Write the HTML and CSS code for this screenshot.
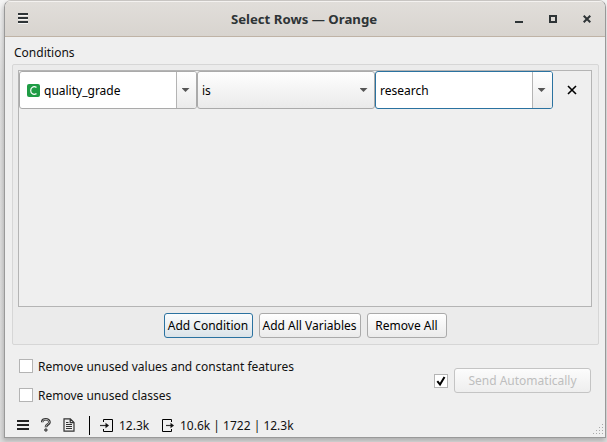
FILE: index.html
```html
<!DOCTYPE html>
<html lang="en">
<head>
<meta charset="utf-8">
<title>Select Rows — Orange</title>
<link rel="stylesheet" href="styles.css">
</head>
<body>
<div class="window">
  <header class="titlebar">
    <svg class="burger" width="10" height="12" viewBox="0 0 10 12"><path d="M0 2.500h10M0 6.500h10M0 10.500h10" stroke="#fff" opacity=".7"/><path d="M0 1h10M0 5h10M0 9h10" stroke="#2e3436" stroke-width="2"/></svg>
    <h1>Select Rows — Orange</h1>
    <div class="controls">
      <svg width="8" height="8" viewBox="0 0 8 8"><path d="M0 7h8" stroke="#2e3436" stroke-width="2"/></svg>
      <svg width="8" height="8" viewBox="0 0 8 8"><path d="M1 1h6v6H1z" fill="none" stroke="#2e3436" stroke-width="2"/></svg>
      <svg width="8" height="8" viewBox="0 0 8 8"><path d="M.7.7l6.600 6.600M7.300.7L.7 7.300" stroke="#2e3436" stroke-width="2"/></svg>
    </div>
  </header>
  <main>
    <div class="label">Conditions</div>
    <section class="group">
      <div class="list">
        <div class="row">
          <div class="combo"><div class="field"><span class="badge"><svg width="13" height="13" viewBox="0 0 13 13"><path d="M9.500 3.400C6.200 1.700 3.700 3.500 3.700 6.500s2.500 4.800 5.800 3.100" fill="none" stroke="#fff" stroke-width="1.200"/></svg></span><span class="text">quality_grade</span></div><div class="drop"><i></i></div></div>
          <div class="combo plain"><div class="field"><span class="text">is</span></div><div class="drop"><i></i></div></div>
          <div class="combo focus"><div class="field"><span class="text">research</span></div><div class="drop"><i></i></div></div>
          <svg class="remove" width="10" height="10" viewBox="0 0 10 10"><path d="M1 1l8 8M9 1L1 9" stroke="#000" stroke-width="1.600"/></svg>
        </div>
      </div>
      <div class="buttons">
        <div class="btn active add">Add Condition</div>
        <div class="btn all">Add All Variables</div>
        <div class="btn clear">Remove All</div>
      </div>
    </section>
    <section class="options">
      <div class="checks">
        <div class="check"><span class="box"></span><span class="text">Remove unused values and constant features</span></div>
        <div class="check"><span class="box"></span><span class="text">Remove unused classes</span></div>
      </div>
      <div class="send">
        <span class="box"><svg width="12" height="12" viewBox="0 0 12 12"><path d="M2.300 6.200l2.700 3.300L9.500 2" fill="none" stroke="#000" stroke-width="2"/></svg></span>
        <div class="btn disabled">Send Automatically</div>
      </div>
    </section>
  </main>
  <footer class="status">
    <svg class="menu" width="12" height="10" viewBox="0 0 12 10"><path d="M0 1h12M0 5h12M0 9h12" stroke="#222" stroke-width="1.800"/></svg>
    <svg class="help" width="10" height="14" viewBox="0 0 10 14"><path d="M1.200 4.200C1.200 2 2.800 1.300 4.800 1.300S8.500 2.400 8.500 4.200C8.500 6.500 4.900 6.200 4.900 9.200" fill="none" stroke="#333" stroke-width="2.600"/><path d="M1.400 3.800C1.700 2 3 1.500 4.800 1.500S8.300 2.500 8.300 4.200C8.300 6.300 4.900 6.200 4.900 8.800" fill="none" stroke="#ddd" stroke-width=".8"/><circle cx="4.900" cy="12" r="1.300" fill="#777" stroke="#333" stroke-width=".8"/></svg>
    <svg class="doc" width="12" height="14" viewBox="0 0 12 14"><path d="M1 .8h6.300L11 4.500v8.700H1zM7.200 1v3.700H11" fill="none" stroke="#333" stroke-width="1.200"/><path d="M3 4.500h2.500M3 6.500h6M3 8.500h6M3 10.500h6" stroke="#333"/></svg>
    <span class="divider"></span>
    <svg class="in" width="13" height="15" viewBox="0 0 13 15"><path d="M3.500 4V1.500h9v12h-9V11" fill="none" stroke="#000"/><path d="M0 7.500h8" stroke="#333" stroke-width="1.200"/><path d="M5.500 4.700L9 7.500l-3.500 2.800z" fill="#111"/></svg>
    <span class="count text">12.3k</span>
    <svg class="out" width="13" height="15" viewBox="0 0 13 15"><path d="M9.500 4V1.500h-9v12h9V11" fill="none" stroke="#000"/><path d="M4 7.500h6" stroke="#333" stroke-width="1.200"/><path d="M8.500 4.700L12 7.500l-3.500 2.800z" fill="#111"/></svg>
    <span class="text">10.6k | 1722 | 12.3k</span>
    <svg class="grip" width="12" height="12" viewBox="0 0 12 12"><path d="M9 1.500h1M6 4.500h1M9 4.500h1M3 7.500h1M6 7.500h1M9 7.500h1M0 10.500h1M3 10.500h1M6 10.500h1M9 10.500h1" stroke="#aaa"/></svg>
  </footer>
</div>
</body>
</html>
```
FILE: styles.css
```css
* { box-sizing: border-box; }
body {
  margin: 0;
  height: 442px;
  padding-left: 4px;
  overflow: hidden;
  background: linear-gradient(#f4f4f4, #e2e2e2 80px, #dedede);
  font: 12px/18px "Noto Sans", sans-serif;
  color: #111;
}
svg { display: block; flex: none; }
.window {
  width: 602px;
  height: 438px;
  display: flex;
  flex-direction: column;
  border: 1px solid #999;
  border-top-color: #c8c5c2;
  border-radius: 7px 7px 0 0;
  background: #efefef;
  box-shadow: -1px 3px 5px rgba(0, 0, 0, .22);
  overflow: hidden;
}
.titlebar {
  height: 36px;
  flex: none;
  display: flex;
  align-items: center;
  padding: 0 14px 0 13px;
  border-bottom: 1px solid #bfb3a6;
  background: linear-gradient(#e1deda, #d8d4cf);
  box-shadow: inset 0 1px #f4f2f0;
}
.burger { margin-top: 1px; }
h1 {
  flex: 1;
  margin: 1px 0 0 74px;
  text-align: center;
  font-size: 13.2px;
  font-weight: bold;
  line-height: 18px;
  color: #2e3436;
}
.controls { width: 76px; margin-left: 9px; display: flex; justify-content: space-between; align-items: center; }
main { flex: 1; padding: 7px 6px 0 7px; }
.label { padding-left: 2px; height: 20px; }
.text { padding-top: 1px; }
.group {
  height: 281px;
  padding: 5px 6px 5px 5px;
  border: 1px solid #d6d6d6;
  border-radius: 2px;
  background: #ebebeb;
}
.list { height: 237px; border: 1px solid #b4b4b4; background: #efefef; }
.row { display: flex; align-items: center; }
.combo {
  width: 178px;
  height: 38px;
  display: flex;
  border: 1px solid #aaa;
  border-radius: 3px;
  background: #fff;
  overflow: hidden;
}
.field { flex: 1; display: flex; align-items: center; gap: 4px; padding-left: 4px; color: #000; }
.combo:first-child .field { padding-left: 7px; }
.badge { width: 13px; height: 13px; border-radius: 2px; background: #1f9c45; }
.drop {
  width: 20px;
  display: grid;
  place-items: center;
  padding-right: 2px;
  border-left: 1px solid #b4b4b4;
  background: linear-gradient(#fff, #ebebeb);
}
.drop i { width: 8px; height: 4px; background: #555; clip-path: polygon(0 0, 100% 0, 50% 100%); }
.plain { background: linear-gradient(#fefefe, #eaeaea); }
.plain .drop { border-color: transparent; background: none; }
.focus { border-color: #2a72a0; }
.remove { margin-left: 14px; }
.buttons { display: flex; justify-content: center; gap: 6px; padding-top: 6px; }
.btn {
  height: 25px;
  border: 1px solid #aaa;
  border-radius: 3px;
  background: linear-gradient(#fff, #ebebeb);
  text-align: center;
  line-height: 23px;
  white-space: nowrap;
  color: #000;
}
.active { border-color: #2a72a0; background: linear-gradient(#fafcfd, #dbe3e8); }
.add { width: 89px; }
.all { width: 102px; }
.clear { width: 80px; }
.options { display: flex; justify-content: space-between; padding: 12px 8px 0 7px; }
.checks { display: flex; flex-direction: column; gap: 11px; }
.check { display: flex; align-items: center; gap: 5px; height: 18px; }
.box { width: 14px; height: 14px; flex: none; border: 1px solid #b4b4b4; background: #fff; }
.send { display: flex; align-items: center; gap: 6px; height: 25px; margin-top: 11px; }
.disabled { width: 137px; border-color: #c4c4c4; background: linear-gradient(#fcfcfc, #eee); color: #bebebe; }
.status { height: 24px; flex: none; display: flex; align-items: center; padding-left: 12px; }
.help { margin-left: 12px; }
.doc { margin-left: 12px; }
.divider { width: 1px; height: 19px; margin-left: 14px; background: #000; }
.in { margin-left: 10px; }
.count { width: 30px; margin-left: 6px; }
.out { margin: 0 5px 0 13px; }
.grip { margin: 8px 0 0 auto; }
```
